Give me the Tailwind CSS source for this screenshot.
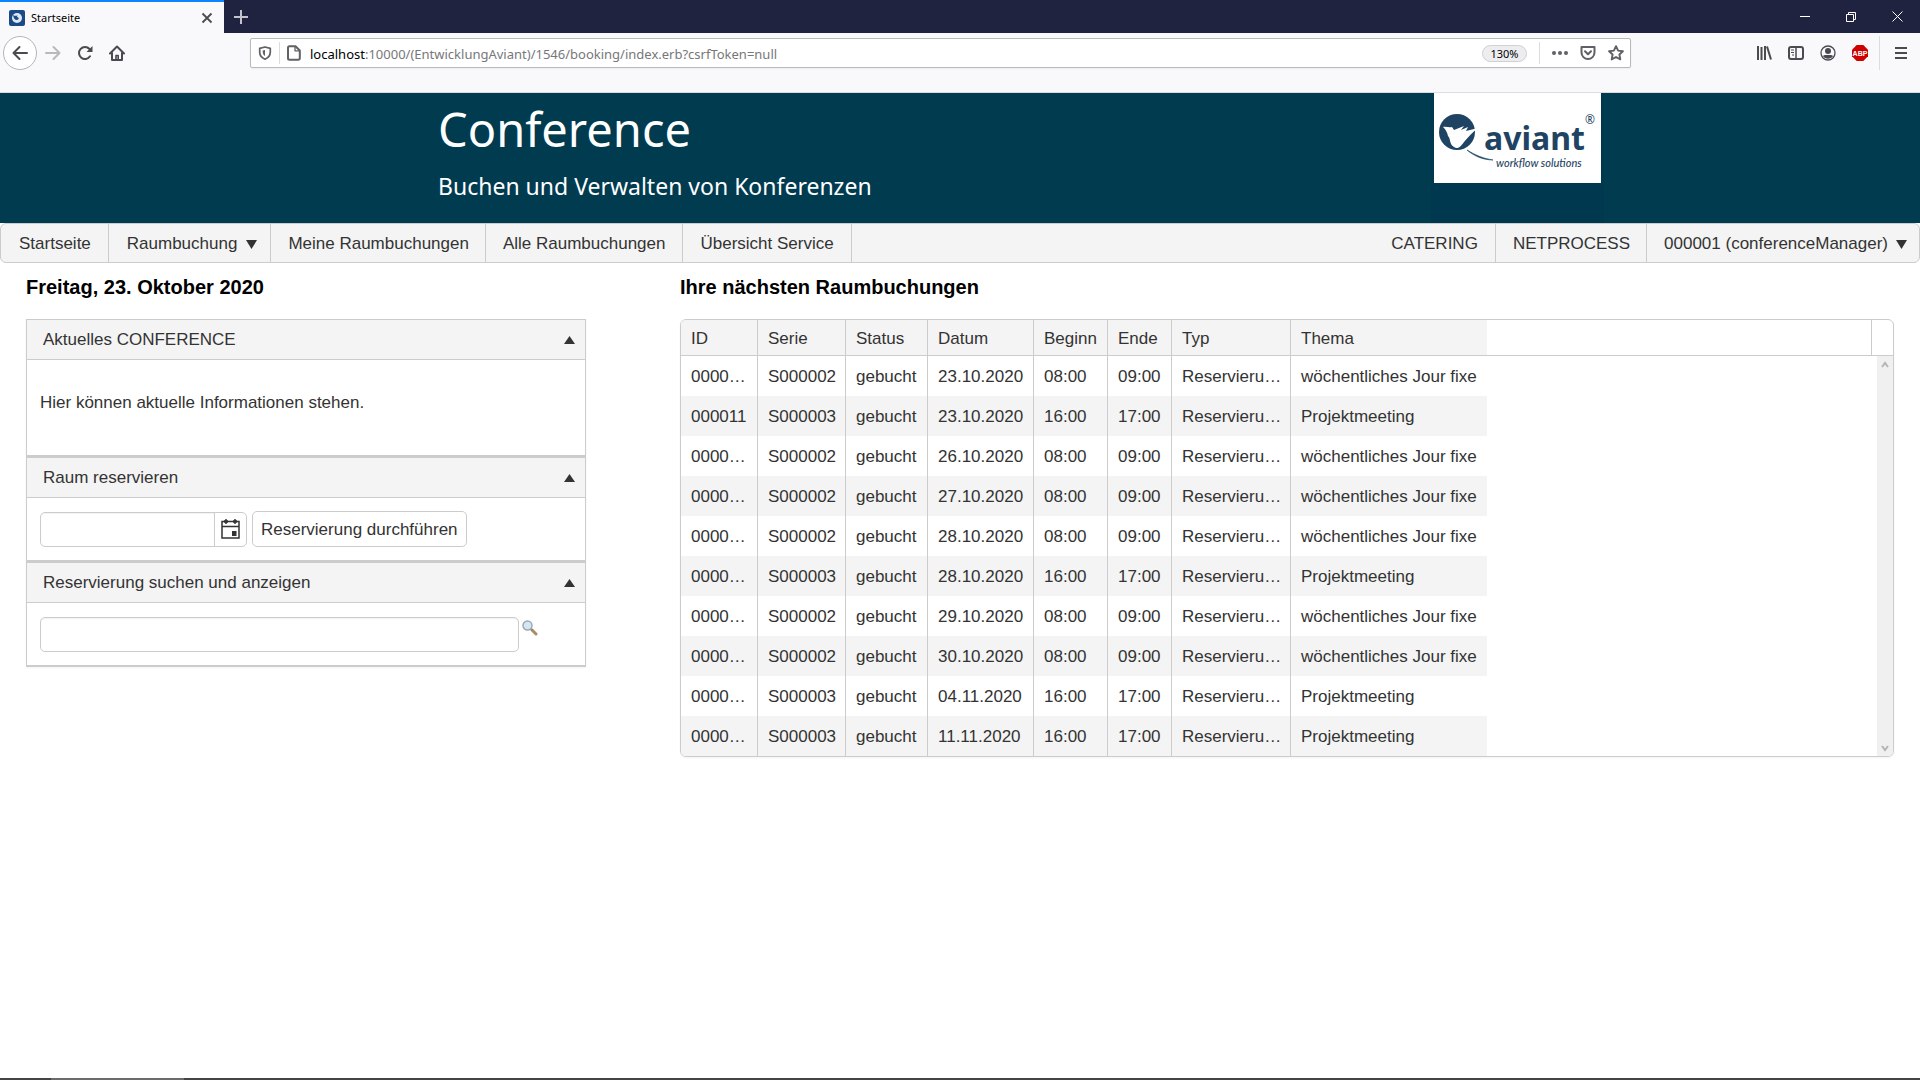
<!DOCTYPE html>
<html lang="de">
<head>
    <meta charset="UTF-8">
    <meta name="viewport" content="width=device-width, initial-scale=1.0">
    <title>Startseite</title>
    <script src="https://cdn.jsdelivr.net/npm/@tailwindcss/browser@4"></script>
    <script>
        // ID, Serie, Datum, Beginn, Ende, Thema
        const bookings = [
            ['0000…', 'S000002', '23.10.2020', '08:00', '09:00', 'wöchentliches Jour fixe'],
            ['000011', 'S000003', '23.10.2020', '16:00', '17:00', 'Projektmeeting'],
            ['0000…', 'S000002', '26.10.2020', '08:00', '09:00', 'wöchentliches Jour fixe'],
            ['0000…', 'S000002', '27.10.2020', '08:00', '09:00', 'wöchentliches Jour fixe'],
            ['0000…', 'S000002', '28.10.2020', '08:00', '09:00', 'wöchentliches Jour fixe'],
            ['0000…', 'S000003', '28.10.2020', '16:00', '17:00', 'Projektmeeting'],
            ['0000…', 'S000002', '29.10.2020', '08:00', '09:00', 'wöchentliches Jour fixe'],
            ['0000…', 'S000002', '30.10.2020', '08:00', '09:00', 'wöchentliches Jour fixe'],
            ['0000…', 'S000003', '04.11.2020', '16:00', '17:00', 'Projektmeeting'],
            ['0000…', 'S000003', '11.11.2020', '16:00', '17:00', 'Projektmeeting']
        ];

        document.addEventListener('DOMContentLoaded', () => {
            const body = document.getElementById('bookings');
            bookings.forEach(([id, serie, datum, beginn, ende, thema], index) => {
                const cells = [id, serie, 'gebucht', datum, beginn, ende, 'Reservieru…', thema];
                const row = document.createElement('tr');
                row.className = 'h-10';
                row.innerHTML = cells.map((cell, i) => `
                    <td class="pt-[2px] pl-[10px] whitespace-nowrap ${index % 2 ? 'bg-[#f4f4f4]' : 'bg-white'} ${i < 7 ? 'border-r border-[#ccc]' : ''}">${cell}</td>
                `).join('') + '<td></td>';
                if (index === 0) {
                    row.insertAdjacentHTML('beforeend', document.getElementById('scrollbar').innerHTML);
                }
                body.appendChild(row);
            });
        });
    </script>
</head>
<body class="flex min-h-screen flex-col bg-white font-['Liberation_Sans',Arial,sans-serif] text-[17px] leading-5 text-[#333]">
    <!-- Browserfenster -->
    <div class="flex h-[33px] bg-[#20233f] font-['Noto_Sans',sans-serif]">
        <div class="flex w-56 items-center border-t-2 border-[#0a84ff] bg-[#f9f9fb] pr-[11px] pl-[9px] text-[11px] text-black">
            <svg class="size-4" viewBox="0 0 16 16">
                <rect width="16" height="16" rx="2" fill="#1c4a86"/>
                <circle cx="8" cy="8" r="5" fill="#dfe9f5"/>
                <path d="M4 4.500C5 6.500 6.500 5.500 8.500 5.500L8 7C10.500 7 10 10 8 10C5.500 10 5 8 4.500 7Z" fill="#1c4a86"/>
            </svg>
            <span class="ml-[6px] flex-1">Startseite</span>
            <button aria-label="Tab schließen">
                <svg class="size-3" viewBox="0 0 12 12" fill="none" stroke="#4a4a4f" stroke-width="1.800"><path d="M1.500 1.500l9 9M10.500 1.500l-9 9"/></svg>
            </button>
        </div>
        <button class="ml-[9px]" aria-label="Neuer Tab">
            <svg class="size-4" viewBox="0 0 16 16" stroke="#c3c3cc" stroke-width="2"><path d="M8 1v14M1 8h14"/></svg>
        </button>
        <div class="ml-auto flex items-center gap-9 pr-[17px]">
            <button aria-label="Minimieren"><svg class="size-[10px]" viewBox="0 0 10 10" stroke="#fff"><path d="M0 4.500h10"/></svg></button>
            <button aria-label="Verkleinern"><svg class="size-[10px]" viewBox="0 0 10 10" stroke="#fff" fill="none"><path d="M.5 2.500h7v7h-7zM2.500 2.500v-2h7v7h-2"/></svg></button>
            <button aria-label="Schließen"><svg class="size-[11px]" viewBox="0 0 11 11" stroke="#fff"><path d="M.5.5l10 10M10.500.5l-10 10"/></svg></button>
        </div>
    </div>
    <div class="flex h-[60px] border-b border-[#dcdcdf] bg-[#f9f9fb] pt-[3px] font-['Noto_Sans',sans-serif]">
        <div class="flex h-[34px] w-[250px] items-center pl-[3px]">
            <button class="flex size-[34px] items-center justify-center rounded-full border border-[#b5b5b8] bg-white" aria-label="Zurück">
                <svg class="size-4" viewBox="0 0 16 16" fill="none" stroke="#4a4a4f" stroke-width="2" stroke-linecap="round" stroke-linejoin="round"><path d="M15 8H1.500M7.500 2l-6 6 6 6"/></svg>
            </button>
            <button class="ml-2" aria-label="Vor">
                <svg class="size-4" viewBox="0 0 16 16" fill="none" stroke="#b9b9bb" stroke-width="2" stroke-linecap="round" stroke-linejoin="round"><path d="M1 8h13.500M8.500 2l6 6-6 6"/></svg>
            </button>
            <button class="ml-4" aria-label="Neu laden">
                <svg class="size-4" viewBox="0 0 16 16" fill="none" stroke="#4a4a4f" stroke-width="2" stroke-linecap="round"><path d="M13 11.300A6 6 0 1 1 12.500 4"/><path d="M15.500 1v6h-6z" fill="#4a4a4f" stroke="none"/></svg>
            </button>
            <button class="ml-4" aria-label="Startseite">
                <svg class="size-4" viewBox="0 0 16 16" fill="none" stroke="#4a4a4f" stroke-width="2" stroke-linejoin="round" stroke-linecap="round"><path d="M1 8.500L8 1.500l7 7M3 8v7h10V8"/><path d="M7 15v-4.500h2.200V15" stroke-width="1.600"/></svg>
            </button>
        </div>
        <div class="mt-[2px] flex h-[30px] flex-1 items-center rounded-[2px] border border-[#b9b9bb] bg-white pr-[6px] pl-[7px] text-[#77777a] shadow-xs">
            <svg class="size-[14px]" viewBox="0 0 14 14" fill="none" stroke="#606065" stroke-width="1.700"><path d="M7 1L12.300 2.300V6C12.300 9.500 10 12 7 13.200 4 12 1.700 9.500 1.700 6V2.300Z" stroke-linejoin="round"/><path d="M7 4v6C5.300 9 4.700 7.500 4.700 5V4.500Z" fill="#606065" stroke="none"/></svg>
            <span class="ml-[7px] h-[22px] border-l border-[#dcdcdf]"></span>
            <svg class="ml-[6px] size-4" viewBox="0 0 16 16" fill="none" stroke="#606065" stroke-width="2" stroke-linejoin="round"><path d="M3.500 1.200h6l4.300 4.300v7.800a1.500 1.500 0 0 1-1.500 1.500H3.500A1.500 1.500 0 0 1 2 13.300V2.700A1.500 1.500 0 0 1 3.500 1.200Z"/><path d="M9 1.500v4.300h4.500" stroke-width="1.300"/></svg>
            <div class="ml-2 flex-1 pt-px text-[13px]"><span class="text-black">localhost</span>:10000/(EntwicklungAviant)/1546/booking/index.erb?csrfToken=null</div>
            <button class="h-[17px] w-[45px] rounded-full border border-[#d0d0d2] bg-[#ededf0] text-[11px] leading-[15px] text-black">130%</button>
            <span class="mx-3 h-[22px] border-l border-[#dcdcdf]"></span>
            <button aria-label="Seitenaktionen"><svg class="size-4" viewBox="0 0 16 16" fill="#606065"><circle cx="2" cy="8" r="2"/><circle cx="8" cy="8" r="2"/><circle cx="14" cy="8" r="2"/></svg></button>
            <button class="ml-3" aria-label="Pocket"><svg class="size-4" viewBox="0 0 16 16" fill="none" stroke="#606065" stroke-width="2" stroke-linecap="round" stroke-linejoin="round"><path d="M1.500 2h13v5.500a6.500 6.500 0 0 1-13 0Z"/><path d="M5 6.300l3 3 3-3"/></svg></button>
            <button class="ml-3" aria-label="Lesezeichen"><svg class="size-4" viewBox="0 0 16 16" fill="none" stroke="#606065" stroke-width="1.900" stroke-linejoin="round"><path d="M8 1.200l2.100 4.400 4.800.6-3.500 3.300.9 4.900L8 12l-4.300 2.400.9-4.900L1.100 6.200l4.800-.6Z"/></svg></button>
        </div>
        <div class="flex h-[34px] w-[289px] items-center justify-end gap-4 pr-3">
            <button aria-label="Bibliothek"><svg class="size-4" viewBox="0 0 16 16" fill="none" stroke="#4a4a4f" stroke-width="2"><path d="M2 1v14M5.500 2v13M9 1v14M11 1.500l4 13"/></svg></button>
            <button aria-label="Sidebars"><svg class="size-4" viewBox="0 0 16 16" fill="none" stroke="#4a4a4f" stroke-width="2"><rect x="1" y="2" width="14" height="12" rx="2"/><path d="M8 2v12" stroke-width="1.500"/><path d="M3 5h3M3 7.500h3M4 10h2" stroke-width="1"/></svg></button>
            <button aria-label="Konto"><svg class="size-4" viewBox="0 0 16 16"><circle cx="8" cy="8" r="7" fill="none" stroke="#4a4a4f" stroke-width="1.300"/><circle cx="8" cy="6" r="3" fill="#4a4a4f"/><path d="M3 11c1.500-1.500 2.500-1 5-1s3.500-.5 5 1c-1 1.800-3 2.800-5 2.800S4 12.800 3 11Z" fill="#4a4a4f"/></svg></button>
            <button aria-label="Adblock Plus"><svg class="size-4" viewBox="0 0 16 16"><path d="M4.700 0h6.600L16 4.700v6.600L11.300 16H4.700L0 11.300V4.700Z" fill="#d00000"/><text x="8" y="10.500" text-anchor="middle" font-size="7" font-weight="700" fill="#fff" font-family="Liberation Sans">ABP</text></svg></button>
            <div class="-ml-[5px] flex h-[34px] items-center border-l border-[#dcdcdf] pl-[14px]">
                <button aria-label="Menü"><svg class="size-[14px]" viewBox="0 0 14 14" stroke="#4a4a4f" stroke-width="2"><path d="M1 2h12M1 7h12M1 12h12"/></svg></button>
            </div>
        </div>
    </div>

    <header class="flex h-[130px] justify-between bg-[#003b50] pr-4 pl-[438px] font-['Noto_Sans',sans-serif] text-white">
        <div>
            <h1 class="mt-1 text-[47px] leading-[64px]">Conference</h1>
            <p class="mt-[7px] text-[23px] leading-9">Buchen und Verwalten von Konferenzen</p>
        </div>
        <div class="mr-[300px] bg-[#00384f] px-[3px]">
            <svg class="h-[90px] w-[167px] bg-white" viewBox="0 0 167 90" fill="#1f4463" role="img" aria-label="aviant workflow solutions">
                <circle cx="23" cy="39" r="18"/>
                <path d="M9 34C12 33 15 35 18 34L20 37L30 33L27 37L34 34L32 38L44 35C38 40 34 44 30 49C27 53 24 57 20 54C15 51 17 46 14 43C13 39 12 37 9 34Z" fill="#fff"/>
                <path d="M33 57C40 63 49 67 59 67C49 65.500 41 62 33 57Z" stroke="#1f4463" stroke-width=".6"/>
                <text x="50" y="57" font-family="Noto Sans" font-size="32" font-weight="700">aviant</text>
                <text x="62" y="74" font-family="Lato" font-size="11" font-style="italic" font-weight="500">workflow solutions</text>
                <text x="151" y="31" font-family="Noto Sans" font-size="12">®</text>
            </svg>
        </div>
    </header>

    <nav class="flex h-10 rounded-[6px] border border-[#ccc] bg-[#f4f4f4] leading-10 whitespace-nowrap">
        <a href="#" class="border-r border-[#ccc] pr-[17px] pl-[18px]">Startseite</a>
        <a href="#" class="border-r border-[#ccc] pr-[13px] pl-[18px]">Raumbuchung<svg class="ml-[9px] inline h-[9px] w-[11px] align-baseline" viewBox="0 0 11 9" fill="#333"><path d="M0 0h11L5.500 9Z"/></svg></a>
        <a href="#" class="border-r border-[#ccc] pr-4 pl-[17px]">Meine Raumbuchungen</a>
        <a href="#" class="border-r border-[#ccc] pr-[17px] pl-[17px]">Alle Raumbuchungen</a>
        <a href="#" class="border-r border-[#ccc] pr-[17px] pl-[17px]">Übersicht Service</a>
        <a href="#" class="ml-auto border-r border-[#ccc] pr-[17px] pl-[17px]">CATERING</a>
        <a href="#" class="border-r border-[#ccc] pr-4 pl-[17px]">NETPROCESS</a>
        <a href="#" class="pr-3 pl-[17px]">000001 (conferenceManager)<svg class="ml-2 inline h-[9px] w-[11px] align-baseline" viewBox="0 0 11 9" fill="#333"><path d="M0 0h11L5.500 9Z"/></svg></a>
    </nav>

    <main class="grid flex-1 grid-cols-[560fr_1214fr] content-start gap-x-[94px] px-[26px]">
        <section>
            <h2 class="pt-3 pb-5 text-[20px] leading-6 font-bold text-black">Freitag, 23. Oktober 2020</h2>
            <div class="border border-b-2 border-[#ccc] shadow-xs">
                <button class="flex h-10 w-full items-center justify-between border-b border-[#ccc] bg-[#f4f4f4] pr-[10px] pl-4">Aktuelles CONFERENCE
                    <svg class="h-[9px] w-[11px]" viewBox="0 0 11 9" fill="#333"><path d="M0 9h11L5.500 1Z"/></svg>
                </button>
                <p class="px-[13px] pt-[33px] pb-[42px]">Hier können aktuelle Informationen stehen.</p>
                <button class="flex h-[43px] w-full items-center justify-between border-t-3 border-b border-[#ccc] bg-[#f4f4f4] pr-[10px] pl-4">Raum reservieren
                    <svg class="h-[9px] w-[11px]" viewBox="0 0 11 9" fill="#333"><path d="M0 9h11L5.500 1Z"/></svg>
                </button>
                <form class="flex h-[62px] items-center gap-[5px] px-[13px]">
                    <div class="flex h-[35px] w-[207px] rounded-[5px] border border-[#ccc]">
                        <input type="text" aria-label="Datum" class="w-full min-w-0 rounded-l-[5px] px-2 inset-shadow-xs">
                        <button type="button" class="flex w-8 shrink-0 items-center justify-center border-l border-[#ccc]" aria-label="Kalender öffnen">
                            <svg class="h-5 w-[19px]" viewBox="0 0 19 20" fill="none" stroke="#333" stroke-width="1.500"><rect x="1" y="2.500" width="17" height="16.500"/><path d="M1 7.500h17M5 0v5M14 0v5"/><path d="M3 2.500h4M12 2.500h4" stroke-width="2.500"/><rect x="11" y="12" width="4.500" height="5" fill="#333" stroke="none"/></svg>
                        </button>
                    </div>
                    <button type="button" class="h-9 rounded-[5px] border border-[#ccc] bg-white px-2 pt-px whitespace-nowrap">Reservierung durchführen</button>
                </form>
                <button class="flex h-[43px] w-full items-center justify-between border-t-3 border-b border-[#ccc] bg-[#f4f4f4] pr-[10px] pl-4">Reservierung suchen und anzeigen
                    <svg class="h-[9px] w-[11px]" viewBox="0 0 11 9" fill="#333"><path d="M0 9h11L5.500 1Z"/></svg>
                </button>
                <form class="flex h-[62px] items-start gap-[3px] px-[13px] pt-[14px]">
                    <input type="text" aria-label="Reservierung suchen" class="h-[35px] w-[479px] rounded-[5px] border border-[#ccc] px-2 inset-shadow-xs">
                    <button type="button" class="mt-[3px]" aria-label="Suchen">
                        <svg class="size-4" viewBox="0 0 16 16"><path d="M10 10l4 4" stroke="#b08a5c" stroke-width="3" stroke-linecap="round"/><path d="M8 8l2.500 2.500" stroke="#888" stroke-width="2"/><circle cx="5.500" cy="5.500" r="4.500" fill="#d3e6f3" stroke="#9fa9b2" stroke-width="1.500"/></svg>
                    </button>
                </form>
            </div>
        </section>

        <section>
            <h2 class="pt-3 pb-5 text-[20px] leading-6 font-bold text-black">Ihre nächsten Raumbuchungen</h2>
            <div class="overflow-hidden rounded-[6px] border border-[#ccc] shadow-xs">
                <table class="w-full table-fixed border-separate border-spacing-0 text-left">
                    <thead>
                        <tr class="h-9">
                            <th class="w-[77px] border-r border-b border-[#ccc] bg-[#f4f4f4] pt-[2px] pl-[10px] font-normal">ID</th>
                            <th class="w-[88px] border-r border-b border-[#ccc] bg-[#f4f4f4] pt-[2px] pl-[10px] font-normal">Serie</th>
                            <th class="w-[82px] border-r border-b border-[#ccc] bg-[#f4f4f4] pt-[2px] pl-[10px] font-normal">Status</th>
                            <th class="w-[106px] border-r border-b border-[#ccc] bg-[#f4f4f4] pt-[2px] pl-[10px] font-normal">Datum</th>
                            <th class="w-[74px] border-r border-b border-[#ccc] bg-[#f4f4f4] pt-[2px] pl-[10px] font-normal">Beginn</th>
                            <th class="w-[64px] border-r border-b border-[#ccc] bg-[#f4f4f4] pt-[2px] pl-[10px] font-normal">Ende</th>
                            <th class="w-[119px] border-r border-b border-[#ccc] bg-[#f4f4f4] pt-[2px] pl-[10px] font-normal">Typ</th>
                            <th class="w-[196px] border-b border-[#ccc] bg-[#f4f4f4] pt-[2px] pl-[10px] font-normal">Thema</th>
                            <th class="border-r border-b border-[#ccc]"></th>
                            <th class="w-[21px] border-b border-[#ccc]"></th>
                        </tr>
                    </thead>
                    <tbody id="bookings"></tbody>
                </table>
            </div>
        </section>
    </main>

    <!-- Rechte Spalte der Tabelle mit dem Rollbalken -->
    <template id="scrollbar">
        <td rowspan="10">
            <div class="ml-auto flex h-[400px] w-4 flex-col items-center justify-between bg-[#f0f0f0] pt-[5px] pb-1">
                <svg class="size-2" viewBox="0 0 8 8" fill="none" stroke="#b5b5b5" stroke-width="2"><path d="M1 6l3-4 3 4"/></svg>
                <svg class="size-2" viewBox="0 0 8 8" fill="none" stroke="#b5b5b5" stroke-width="2"><path d="M1 2l3 4 3-4"/></svg>
            </div>
        </td>
    </template>

    <footer class="h-[2px] bg-[#444] pl-[51px]">
        <div class="h-full w-[133px] bg-[#6b6b6b]"></div>
    </footer>
</body>
</html>
